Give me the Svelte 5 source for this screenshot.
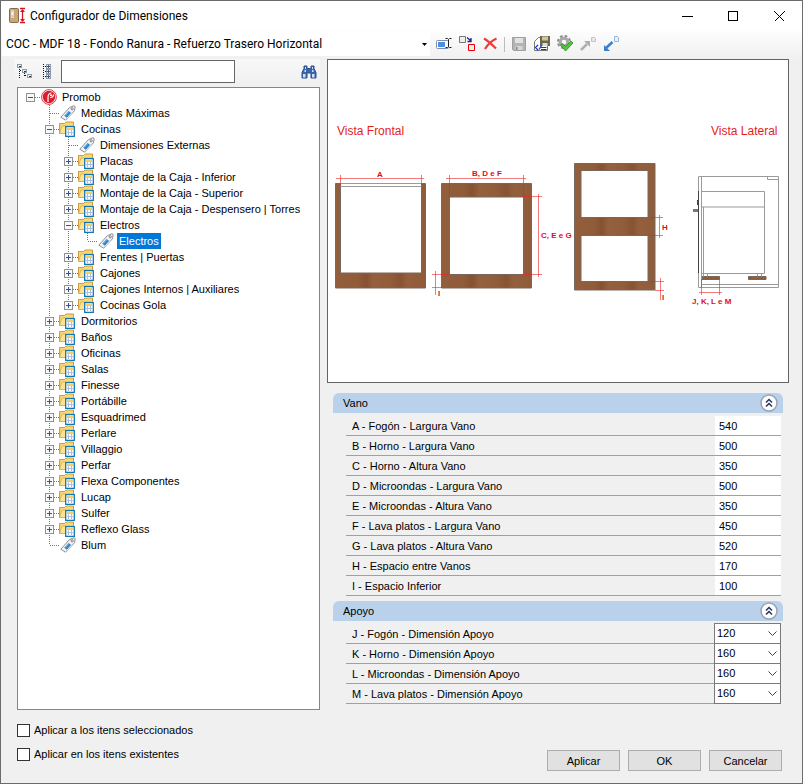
<script>
  const presets = ['COC - MDF 18 - Fondo Ranura - Refuerzo Trasero Horizontal'];

  const tree = {
    label: 'Promob',
    icon: 'logo',
    children: [
      { label: 'Medidas Máximas', icon: 'tag' },
      {
        label: 'Cocinas',
        children: [
          { label: 'Dimensiones Externas', icon: 'tag' },
          { label: 'Placas' },
          { label: 'Montaje de la Caja - Inferior' },
          { label: 'Montaje de la Caja - Superior' },
          { label: 'Montaje de la Caja - Despensero | Torres' },
          { label: 'Electros', children: [{ label: 'Electros', icon: 'tag', id: 'electros' }] },
          { label: 'Frentes | Puertas' },
          { label: 'Cajones' },
          { label: 'Cajones Internos | Auxiliares' },
          { label: 'Cocinas Gola' }
        ]
      },
      { label: 'Dormitorios' },
      { label: 'Baños' },
      { label: 'Oficinas' },
      { label: 'Salas' },
      { label: 'Finesse' },
      { label: 'Portábille' },
      { label: 'Esquadrimed' },
      { label: 'Perlare' },
      { label: 'Villaggio' },
      { label: 'Perfar' },
      { label: 'Flexa Componentes' },
      { label: 'Lucap' },
      { label: 'Sulfer' },
      { label: 'Reflexo Glass' },
      { label: 'Blum', icon: 'tag' }
    ]
  };

  let vano = $state([
    { label: 'A - Fogón - Largura Vano', value: '540' },
    { label: 'B - Horno - Largura Vano', value: '500' },
    { label: 'C - Horno - Altura Vano', value: '350' },
    { label: 'D - Microondas - Largura Vano', value: '500' },
    { label: 'E - Microondas - Altura Vano', value: '350' },
    { label: 'F - Lava platos - Largura Vano', value: '450' },
    { label: 'G - Lava platos - Altura Vano', value: '520' },
    { label: 'H - Espacio entre Vanos', value: '170' },
    { label: 'I - Espacio Inferior', value: '100' }
  ]);

  let apoyo = $state([
    { label: 'J - Fogón - Dimensión Apoyo', value: '120' },
    { label: 'K - Horno - Dimensión Apoyo', value: '160' },
    { label: 'L - Microondas - Dimensión Apoyo', value: '160' },
    { label: 'M - Lava platos - Dimensión Apoyo', value: '160' }
  ]);

  let selected = $state('electros');
  let search = $state('');
  let vanoOpen = $state(true);
  let apoyoOpen = $state(true);
  let applySelected = $state(false);
  let applyExisting = $state(false);
</script>

{#snippet nodeIcon(kind)}
  {#if kind === 'logo'}
    <svg class="node-icon" width="20" height="16" viewBox="-1 0 20 16">
      <circle cx="8" cy="8" r="7.400" fill="#fff" stroke="#dc3a44" stroke-width="1" />
      <circle cx="8" cy="8" r="6.200" fill="#d8202c" />
      <path d="M7 13V8.500c0-3 1.500-4.500 3.500-4.500M9 8.500c2 0 3.500-1 3.500-3" fill="none" stroke="#fff" stroke-width="1.200" />
      <path d="M9 5.500h2v1.500H9z" fill="#fff" />
    </svg>
  {:else if kind === 'tag'}
    <svg class="node-icon" width="20" height="16" viewBox="-1 0 20 16">
      <path d="M.8 12.200 9.500 2.500l4.500-1.800 1.200.8-.7 4.300L5.500 15.200z" fill="#f1f3f5" stroke="#8b9095" />
      <path d="m3.800 10.800 4.700-5.300 3.200 2.300-4.900 5.400z" fill="#2b86c8" stroke="#fff" stroke-width=".8" />
      <path d="m5.500 10.300 3.400-3.900" stroke="#8cc4ea" />
      <circle cx="12.200" cy="3.800" r="1.100" fill="#fff" stroke="#707070" stroke-width=".9" />
    </svg>
  {:else}
    <svg class="node-icon" width="20" height="16" viewBox="0 0 20 16">
      <path d="M.5 12.500v-10h5L7 1h7.500v11.500z" fill="#f8d775" stroke="#cf9a3c" />
      <path d="m.5 12.500 2.500-7.500h11.500v7.500z" fill="#fde493" stroke="#d9a548" stroke-width=".7" />
      <path d="M6.700 5.700h8.600v9.600H6.700z" fill="#fff" stroke="#1677b0" stroke-width="1.300" />
      <path d="M8 8h6" stroke="#f4b83d" stroke-width="1.500" />
      <path d="M8 11.500h6M9.500 9v5M12.500 9v5" stroke="#a3c3dc" />
    </svg>
  {/if}
{/snippet}

{#snippet treeRow(node, guides, last, depth)}
  <li role="treeitem" aria-selected={node.id === selected}>
    <div class="tree-row">
      {#each guides as line}
        <svg class="guide" width="19" height="16">
          {#if line}<path d="M9.500 0V16" />{/if}
        </svg>
      {/each}
      <svg class="guide" width="19" height="16">
        {#if depth > 0}<path d={last ? 'M9.500 0V8' : 'M9.500 0V16'} />{/if}
        <path d="M10 8.500H19" />
        {#if !node.icon || node.children}
          <rect x="5.500" y="4.500" width="8" height="8" rx="1" />
          <path class="sign" d={node.children ? 'M7 8.500h5' : 'M7 8.500h5M9.500 6v5'} />
        {/if}
      </svg>
      {@render nodeIcon(node.icon)}
      <button
        class="tree-label"
        class:selected={node.id && node.id === selected}
        onclick={() => (selected = node.id)}
      >{node.label}</button>
    </div>
    {#if node.children}
      <ul role="group">
        {#each node.children as child, i}
          {@render treeRow(child, depth === 0 ? [false] : [...guides, !last], i === node.children.length - 1, depth + 1)}
        {/each}
      </ul>
    {/if}
  </li>
{/snippet}

{#snippet groupHeader(title, toggle)}
  <div class="group-header">
    <h2>{title}</h2>
    <button class="collapse" aria-label={title} onclick={toggle}>
      <svg width="18" height="18" viewBox="0 0 18 18">
        <circle cx="9" cy="9" r="8" fill="#fdfdfe" stroke="#9aa3b2" stroke-width="1.500" />
        <path d="m6 8.500 3-3 3 3M6 12.500l3-3 3 3" fill="none" stroke="#23355c" stroke-width="1.500" />
      </svg>
    </button>
  </div>
{/snippet}

<div class="window">
  <header class="titlebar">
    <svg width="18" height="18" viewBox="0 0 18 18">
      <rect x=".5" y="1.500" width="9" height="14" rx="1" fill="#c9a77c" stroke="#8a6a48" />
      <path d="M2 3h3v8H2z" fill="#e4cfae" />
      <path d="M3.500 5v3" stroke="#fff" stroke-width="1.500" />
      <path d="M11 1.500h5M11 15.500h5M13.500 3v11" stroke="#d5142c" stroke-width="1.300" />
      <path d="m13.500 2-2.500 3h5zM13.500 15l-2.500-3h5z" fill="#d5142c" />
    </svg>
    <h1>Configurador de Dimensiones</h1>
    <div class="window-buttons">
      <button aria-label="Minimizar">
        <svg width="11" height="11"><path d="M0 5.500h11" /></svg>
      </button>
      <button aria-label="Maximizar">
        <svg width="11" height="11"><path d="M.5.5h9v9h-9z" /></svg>
      </button>
      <button aria-label="Cerrar">
        <svg width="11" height="11"><path d="m.5.5 10 10m0-10-10 10" shape-rendering="auto" /></svg>
      </button>
    </div>
  </header>

  <div class="toolbar">
    <div class="preset">
      <select aria-label="Configuración">
        {#each presets as preset}<option>{preset}</option>{/each}
      </select>
      <svg width="11" height="5"><path d="M3 1h5L5.500 4z" /></svg>
    </div>
    <button aria-label="Renombrar">
      <svg width="18" height="18" viewBox="0 0 18 18">
        <rect x="1.500" y="5.500" width="12" height="8" rx="1" fill="#fff" stroke="#7d8fa8" />
        <path d="M3 7h7v5H3z" fill="#4b8fe4" />
        <path d="M10.500 3.500h2l1 1 1-1h2M10.500 12.500h2l1-1 1 1h2M13.500 4.500v7" fill="none" stroke="#222" />
      </svg>
    </button>
    <button aria-label="Duplicar">
      <svg width="18" height="18" viewBox="0 0 18 18">
        <path d="M1.500 1.500h6v6h-6z" fill="#eee" stroke="#777" />
        <path d="M10.500 9.500h6v6h-6z" fill="#eee" stroke="#e00" />
        <path d="m9 2.500 3.500 3M13 3v3.500H9.500" fill="none" stroke="#18277c" stroke-width="1.300" />
      </svg>
    </button>
    <button aria-label="Eliminar">
      <svg width="18" height="18" viewBox="0 0 18 18">
        <path d="M3 3.500c5 3 8 6 12 10M15.500 3.500C10 6 7 9 4 14" fill="none" stroke="#f03a3a" stroke-width="2.200" />
      </svg>
    </button>
    <span class="separator"></span>
    <button aria-label="Guardar">
      <svg width="18" height="18" viewBox="0 0 18 18">
        <path d="M2.500 2.500h13v13h-12l-1-1z" fill="#b4b4b4" stroke="#a0a0a0" />
        <path d="M5 3h8v5H5z" fill="#e2e2e2" />
        <path d="M5.500 11h7v4h-7z" fill="#d6d6d6" />
        <path d="M6.800 12v3" stroke="#888" stroke-width="1.500" />
      </svg>
    </button>
    <button aria-label="Guardar como">
      <svg width="18" height="18" viewBox="0 0 18 18">
        <path d="M1.500 15.500v-9l4-4h9v13z" fill="#fff" stroke="#777" />
        <path d="M7 1h10v10H7z" fill="#6b6850" />
        <path d="M9 1.500h6v4H9z" fill="#ccc59a" />
        <path d="M9.500 8h5v3h-5z" fill="#ddd" />
        <path d="m5 10-2.500 2.500L5 15M8.500 10.500 6 14.500M8 12.500h5.500M8 14.500h5.500" fill="none" stroke="#1732d2" stroke-width="1.200" />
      </svg>
    </button>
    <button aria-label="Procesar">
      <svg width="18" height="18" viewBox="0 0 18 18">
        <circle cx="8" cy="7" r="6" fill="none" stroke="#909090" stroke-width="2.200" stroke-dasharray="2.700 2" />
        <circle cx="8" cy="7" r="3.800" fill="none" stroke="#a8a8a8" stroke-width="3" />
        <path d="m4.500 10 2-1.500 3 3L15 6l2 2-7.500 8z" fill="#4fc63b" stroke="#248a20" stroke-width=".8" />
      </svg>
    </button>
    <button aria-label="Importar">
      <svg width="18" height="18" viewBox="0 0 18 18">
        <path d="m2 15 6-6" stroke="#b0b0b0" stroke-width="2.500" />
        <path d="M5 6h6v6z" fill="#b0b0b0" />
        <path d="M12.500 2.500h3l1 1v3h-4z" fill="#e8e8e8" stroke="#c4c4c4" />
      </svg>
    </button>
    <button aria-label="Exportar">
      <svg width="18" height="18" viewBox="0 0 18 18">
        <path d="m4 13 6.500-6" stroke="#3d7fc9" stroke-width="2.500" />
        <path d="M2 10v6h6z" fill="#3d7fc9" />
        <path d="M12.500 1.500h3l1 1v4h-4z" fill="#eaf3fc" stroke="#8fb7df" />
      </svg>
    </button>
  </div>

  <main>
    <section class="left">
      <div class="searchbar">
        <button aria-label="Expandir nivel">
          <svg width="16" height="18" viewBox="0 0 16 18" shape-rendering="crispEdges">
            <path d="M2.500 6v9M3 7.500h3M7.500 10v4M8 12.500h3" stroke="#111" stroke-dasharray="1 1" />
            <path d="M.5 1.500h4v3h-4zM5.500 6.500h4v3h-4zM10.500 11.500h4v3h-4z" fill="#eef3f8" stroke="#8c9cae" />
            <path d="M2 3h2M7 8h2M12 13h2" stroke="#334" />
          </svg>
        </button>
        <button aria-label="Contraer todo">
          <svg width="16" height="18" viewBox="0 0 16 18" shape-rendering="crispEdges">
            <path d="M4.500 1v16M6 3.500h3M6 8.500h3M6 13.500h3" stroke="#111" stroke-dasharray="1 1" />
            <path d="M7.500 1.500h4v4h-4zM7.500 6.500h4v4h-4zM7.500 11.500h4v4h-4z" fill="#eef3f8" stroke="#8c9cae" />
            <path d="M8 3.500h3M9.500 2v3M8 8.500h3M9.500 7v3M8 13.500h3M9.500 12v3" stroke="#556" />
          </svg>
        </button>
        <input type="text" aria-label="Buscar" bind:value={search} />
        <button class="find" aria-label="Buscar siguiente">
          <svg width="16" height="14" viewBox="0 0 16 14">
            <path d="M3 1h3v2.500h4V1h3v2.500l2 4V13h-5V8H6v5H1V7.500l2-4z" fill="#3c65ad" stroke="#2d5191" />
            <path d="M2 9h2.500v3.500H2zM11 9h2.500v3.500H11zM4 2h1v2H4zM11 2h1v2h-1zM3.500 5H5v2H3.500zM11 5h1.500v2H11z" fill="#cfe0f7" />
          </svg>
        </button>
      </div>
      <ul class="tree" role="tree">
        {@render treeRow(tree, [], true, 0)}
      </ul>
    </section>

    <section class="right">
      <div class="preview">
        <svg viewBox="328 60 460 322" role="img" aria-label="Vista Frontal y Vista Lateral">
          <defs>
            <linearGradient id="wood">
              <stop offset="0" stop-color="#925e3b" />
              <stop offset=".25" stop-color="#8f5b39" />
              <stop offset=".34" stop-color="#855132" />
              <stop offset=".42" stop-color="#94603d" />
              <stop offset=".62" stop-color="#905c3a" />
              <stop offset=".72" stop-color="#875334" />
              <stop offset=".8" stop-color="#935f3c" />
              <stop offset="1" stop-color="#8f5b39" />
            </linearGradient>
          </defs>

          <g class="title">
            <text x="337" y="135">Vista Frontal</text>
            <text x="711" y="135">Vista Lateral</text>
          </g>

          <g class="panel">
            <path d="M335.500 183.500h5v89.500h81v-89.500h4v104.500h-90z" />
            <path d="M441.500 183.500h90v104.500h-90zM449.500 197v77.500h74V197z" />
            <path d="M574.500 163.500h80.500v126.500h-80.500zM581 170.500v47h67v-47zM581 235.500v46h67v-46z" />
            <path d="M702 276.500h17.500v3H702zM748.500 276.500H766v3h-17.500z" />
          </g>

          <g class="outline">
            <path d="M340.500 183.500h81M340.500 186.500h81" />
            <path d="M698.500 176.500h80v111h-80zM701.500 176.500v111M767.500 176.500v3h11M702 284.500h76.500" />
            <path d="M702 191.500h62.500v82H702M702 207h62.500M703.500 207v66" />
            <path d="M703.500 273.500v3M707.500 273.500v3M757.500 273.500v3M761.500 273.500v3" />
          </g>
          <path class="door" d="M698.500 191v82M697.500 200v5" />
          <path class="handle" d="M693 210.500h5" />

          <g class="dims">
            <path d="M336 178.500h88M340.500 175v10M421.500 175v10" />
            <path d="M446 178.500h80M449.500 175v22M523.500 175v22" />
            <path d="M538.500 194v83M522 196.500h20M522 274.500h20" />
            <path d="M435.500 271v24M432 274.500h18M432 287.500h10" />
            <path d="M659.500 215v23M648 217.500h15M648 235.500h15" />
            <path d="M660.500 278v22M648 281.500h16M655 290.500h9" />
            <path d="M699 292.500h23M701.500 279v16M719.500 279v16" />
          </g>

          <g class="letters">
            <text x="377" y="177">A</text>
            <text x="472" y="176">B, D e F</text>
            <text x="541" y="238">C, E e G</text>
            <text x="438" y="296">I</text>
            <text x="662" y="230">H</text>
            <text x="662" y="300">I</text>
            <text x="692" y="304">J, K, L e M</text>
          </g>
        </svg>
      </div>

      <div class="group">
        {@render groupHeader('Vano', () => (vanoOpen = !vanoOpen))}
        {#if vanoOpen}
          <div class="props">
            {#each vano as prop, i}
              <div class="prop">
                <label for="vano-{i}">{prop.label}</label>
                <input id="vano-{i}" type="text" bind:value={prop.value} />
              </div>
            {/each}
          </div>
        {/if}
      </div>

      <div class="group">
        {@render groupHeader('Apoyo', () => (apoyoOpen = !apoyoOpen))}
        {#if apoyoOpen}
          <div class="props">
            {#each apoyo as prop, i}
              <div class="prop">
                <label for="apoyo-{i}">{prop.label}</label>
                <div class="combo">
                  <select id="apoyo-{i}" bind:value={prop.value}>
                    <option>120</option>
                    <option>160</option>
                  </select>
                  <svg width="9" height="6"><path d="m.5.5 4 4 4-4" /></svg>
                </div>
              </div>
            {/each}
          </div>
        {/if}
      </div>
    </section>
  </main>

  <footer>
    <div class="checks">
      <label><input type="checkbox" bind:checked={applySelected} />Aplicar a los itens seleccionados</label>
      <label><input type="checkbox" bind:checked={applyExisting} />Aplicar en los itens existentes</label>
    </div>
    <div class="actions">
      <button>Aplicar</button>
      <button>OK</button>
      <button>Cancelar</button>
    </div>
  </footer>
</div>

<style>
  :global(body) {
    margin: 0;
    background: #f0f0f0;
  }

  .window {
    box-sizing: border-box;
    min-height: 100vh;
    display: flex;
    flex-direction: column;
    border: 1px solid #6b6b6b;
    background: #f0f0f0;
    color: #000;
    font-family: 'Liberation Sans', Arial, sans-serif;
    font-size: 11px;
  }

  button,
  input,
  select {
    font: inherit;
    color: inherit;
    box-sizing: border-box;
  }

  button {
    padding: 0;
    border: none;
    background: none;
  }

  svg {
    display: block;
    flex: none;
  }

  .titlebar {
    display: flex;
    align-items: center;
    height: 30px;
    padding-left: 8px;
    background: #fff;
  }

  h1 {
    flex: 1;
    margin: 0 0 0 3px;
    font: 12px Roboto, sans-serif;
  }

  .window-buttons {
    display: flex;
  }

  .window-buttons button {
    width: 46px;
    height: 30px;
    display: flex;
    align-items: center;
    justify-content: center;
  }

  .window-buttons path {
    fill: none;
    stroke: #000;
    shape-rendering: crispEdges;
  }

  .toolbar {
    display: flex;
    box-sizing: border-box;
    align-items: center;
    gap: 5px;
    height: 28px;
    padding: 0 0 2px 1px;
    background: linear-gradient(#fdfdfd, #f0f0f0);
  }

  .toolbar button {
    width: 18px;
    height: 18px;
  }

  .preset {
    position: relative;
    flex: 0 1 428px;
  }

  .preset select {
    width: 100%;
    height: 24px;
    padding: 0 20px 0 4px;
    appearance: none;
    border: none;
    background: #fff;
    font: 12px Roboto, sans-serif;
  }

  .preset svg {
    position: absolute;
    right: 0;
    top: 10px;
    pointer-events: none;
  }

  .separator {
    width: 1px;
    height: 15px;
    background: #bdbdbd;
  }

  main {
    flex: 1;
    display: grid;
    grid-template-columns: 306px 1fr;
    gap: 7px;
    padding: 0 13px;
  }

  .left,
  .right {
    display: flex;
    flex-direction: column;
  }

  .searchbar {
    display: flex;
    align-items: center;
    gap: 6px;
    height: 25px;
    margin-bottom: 3px;
    padding: 0 3px;
    background: linear-gradient(#f8f8f8, #f0f0f0);
  }

  .searchbar input {
    flex: 0 1 174px;
    min-width: 0;
    height: 23px;
    padding: 0 4px;
    border: 1px solid #666;
    background: #fff;
  }

  .find {
    margin-left: auto;
  }

  ul {
    margin: 0;
    padding: 0;
    list-style: none;
  }

  .tree {
    flex: 1;
    margin-left: 3px;
    padding: 1px 3px;
    border: 1px solid #82878f;
    background: #fff;
  }

  .tree-row {
    display: flex;
    height: 16px;
  }

  .tree-label {
    height: 16px;
    padding: 0 2px;
    line-height: 16px;
    white-space: nowrap;
  }

  .tree-label.selected {
    background: #0078d7;
    color: #fff;
  }

  .guide {
    shape-rendering: crispEdges;
  }

  .guide path {
    fill: none;
    stroke: #777;
    stroke-dasharray: 1 1;
  }

  .guide rect {
    fill: #f8f8f8;
    stroke: #919191;
  }

  .guide .sign {
    stroke: #3a4f96;
    stroke-dasharray: none;
  }

  .preview {
    border: 1px solid #646464;
    background: #fff;
    margin-bottom: 10px;
  }

  .preview svg {
    width: 100%;
    height: auto;
  }

  .title {
    fill: #e51c1c;
    font-size: 12px;
  }

  .letters {
    fill: #e00d18;
    font-size: 8px;
    font-weight: bold;
  }

  .panel {
    fill: url(#wood);
    fill-rule: evenodd;
    stroke: #77685d;
    stroke-width: 1;
  }

  .outline {
    fill: none;
    stroke: #9a9a9a;
  }

  .door {
    stroke: #444;
  }

  .handle {
    stroke: #777;
    stroke-width: 3;
  }

  .dims {
    fill: none;
    stroke: #e22;
    stroke-opacity: 0.6;
  }

  .group {
    margin: 0 6px 5px;
  }

  .group-header {
    display: flex;
    align-items: center;
    justify-content: space-between;
    height: 20px;
    padding: 0 5px 0 10px;
    border-radius: 6px 6px 0 0;
    background: #b9d1ea;
  }

  h2 {
    margin: 0;
    font-size: 11px;
    font-weight: normal;
  }

  .props {
    padding: 3px 2px 0 13px;
  }

  .prop {
    display: flex;
    box-sizing: border-box;
    height: 20px;
    border-bottom: 1px solid #a0a0a0;
  }

  .prop label {
    flex: 1;
    padding-left: 6px;
    line-height: 20px;
  }

  .prop input {
    width: 66px;
    padding: 0 4px;
    border: none;
    background: #fff;
  }

  .combo {
    position: relative;
    width: 67px;
    height: 20px;
  }

  .combo select {
    width: 100%;
    height: 21px;
    margin-top: -1px;
    padding: 0 2px 2px;
    appearance: none;
    border: 1px solid #7a7a7a;
    border-radius: 0;
    background: #fff;
  }

  .combo svg {
    position: absolute;
    right: 4px;
    top: 7px;
    pointer-events: none;
  }

  .combo path {
    fill: none;
    stroke: #444;
  }

  footer {
    display: flex;
    justify-content: space-between;
    align-items: flex-end;
    padding: 8px 20px 12px 16px;
  }

  .checks {
    display: grid;
    padding-bottom: 5px;
  }

  .checks label {
    display: flex;
    align-items: center;
    gap: 4px;
    height: 24px;
  }

  .checks input {
    width: 13px;
    height: 13px;
    margin: 0;
    appearance: none;
    border: 1px solid #333;
    background: #fff;
  }

  .checks input:checked {
    background: #0078d7;
  }

  .actions {
    display: flex;
    gap: 8px;
  }

  .actions button {
    width: 73px;
    height: 21px;
    border: 1px solid #adadad;
    background: #e1e1e1;
  }
</style>
